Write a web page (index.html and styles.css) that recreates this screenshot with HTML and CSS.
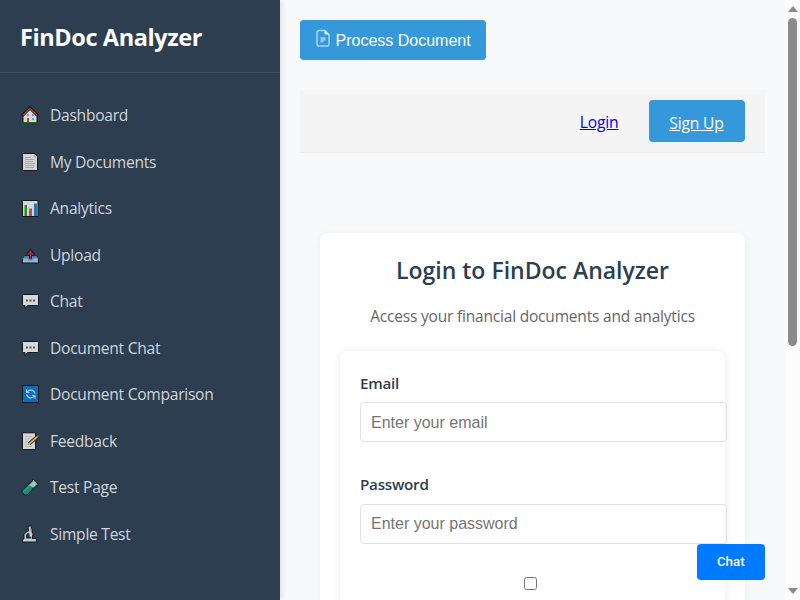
FILE: index.html
```html
<!DOCTYPE html>
<html lang="en">
<head>
<meta charset="utf-8">
<title>FinDoc Analyzer</title>
<link rel="stylesheet" href="styles.css">
</head>
<body>
<div class="app">
  <aside class="sidebar">
    <div class="brand"><h2>FinDoc Analyzer</h2></div>
    <ul class="menu">
      <li><svg class="icon" viewBox="0 0 18 18"><path d="M2 9v8h14V9L9 2z" fill="#d5d8dd" stroke="#171717"/><path d="M1.5 9.5 9 2l7.500 7.500" fill="none" stroke="#171717" stroke-width="3"/><path d="M2 9.300 9 2.300l7 7" fill="none" stroke="#b64434" stroke-width="1.300"/><path d="M6 8h2v2H6zM11 8h2v2h-2zM11 12h2v2h-2z" fill="#4dafd6"/><path d="M6 12h2v4H6z" fill="#c13b30"/><path d="M1.500 16h15v1.500h-15z" fill="#0c700c"/></svg><span>Dashboard</span></li>
      <li><svg class="icon" viewBox="0 0 18 18"><path d="M1.500 .5H14l2.500 3v14h-15z" fill="#d3d5d7" stroke="#171717"/><path d="M13.500 1v3h3M4 4.500h6M4 6.500h9M4 8.500h8M4 10.500h10M4 12.500h9M4 14.500h9" fill="none" stroke="#9a9da0" stroke-width=".8"/></svg><span>My Documents</span></li>
      <li><svg class="icon" viewBox="0 0 18 18"><path d="M1.500 1.500h15.500v16H1.500z" fill="#d5d7da" stroke="#171717"/><path d="M3.500 6H6v11H3.500z" fill="#1d981d"/><path d="M8 9.500h3V17H8z" fill="#d0493a"/><path d="M13 4.500h3V17h-3z" fill="#2275b9"/></svg><span>Analytics</span></li>
      <li><svg class="icon" viewBox="0 0 18 18"><path d="M3.500 10h12l2 2.500V17h-16v-4.500z" fill="#8db6d6" stroke="#171717"/><path d="M3.500 10.500h12l1.500 2h-4l-2 2H8l-2-2H2z" fill="#4b8fc0"/><path d="M9.500 13V6M6.500 8.500l3-3.500 3 3.500" fill="none" stroke="#21181d" stroke-width="3"/><path d="M9.500 13V6M7 8.500l2.500-3 2.500 3" fill="none" stroke="#b02039" stroke-width="1.500"/></svg><span>Upload</span></li>
      <li><svg class="icon" viewBox="0 0 18 18"><path d="M2.500 2.500h14l1 1v9l-1 1h-10L4 16.500v-3H2.500l-1-1v-9z" fill="#d6d7db" stroke="#171717"/><path d="M5 7.500h2v2H5zM8.500 7.500h2v2h-2zM12 7.500h2v2h-2z" fill="#50565c"/></svg><span>Chat</span></li>
      <li><svg class="icon" viewBox="0 0 18 18"><path d="M2.500 2.500h14l1 1v9l-1 1h-10L4 16.500v-3H2.500l-1-1v-9z" fill="#d6d7db" stroke="#171717"/><path d="M5 7.500h2v2H5zM8.500 7.500h2v2h-2zM12 7.500h2v2h-2z" fill="#50565c"/></svg><span>Document Chat</span></li>
      <li><svg class="icon" viewBox="0 0 18 18"><path d="M1.500 .5h16v17h-16z" fill="#0c6dbb" stroke="#171717"/><path d="M5.500 7.500V4.500M5.500 7.500h3M6 7a4.500 4.500 0 0 1 8 1.500M14 10.500v3M14 10.500h-3M13.500 11a4.500 4.500 0 0 1-8-1.500" fill="none" stroke="#b4cfe3" stroke-width="1.200"/></svg><span>Document Comparison</span></li>
      <li><svg class="icon" viewBox="0 0 18 18"><path d="M1.500 .8h13v16.700h-13z" fill="#d3d5d7" stroke="#171717"/><path d="M4 4.500h7M4 7h7M4 9.500h5M4 12h3M4 14.500h7" stroke="#aaadaf" stroke-width=".8"/><path d="m8 12 9.500-8.500" stroke="#171717" stroke-width="3.500"/><path d="m7.500 12.500 9-8" stroke="#d8ae5b" stroke-width="1.800"/><path d="m16 5 1.500-1.500" stroke="#bd5847" stroke-width="1.800"/></svg><span>Feedback</span></li>
      <li><svg class="icon" viewBox="0 0 18 18"><path d="m12 .8 5.500 5.700-2 .5-9 9.500q-2 1.500-4.500-.5t-.5-4l9.500-9z" fill="#168c72" stroke="#171717"/><path d="m12 1.500 4.500 5-1.500.500-2.500 2.500-4.500-2 4-4z" fill="#a0c1d5"/><path d="m3 13.500 5-5" stroke="#3fae92"/></svg><span>Test Page</span></li>
      <li><svg class="icon" viewBox="0 0 18 18"><path d="m7 1.500 3-1 2 9-1 4h4.500v3.500h-14v-3h1.500V9.500Q4 7 7.500 6z" fill="#c9ced2" stroke="#171717"/><path d="m6.500 8 2 .500v3H10v2H5V10z" fill="#26313b"/><path d="M2 15.500h13" stroke="#a9cbe3"/><path d="m9.500 2 1 6" stroke="#858c92"/></svg><span>Simple Test</span></li>
    </ul>
  </aside>
  <main class="content">
    <button class="process" type="button"><svg viewBox="0 0 16 18"><path d="M4 1.500h6l4 4V15.500a1.500 1.500 0 0 1-1.500 1.500H4a2 2 0 0 1-2-2V3.500a2 2 0 0 1 2-2z" fill="none" stroke="#a9d5f1" stroke-width="1.500"/><path d="M9.500 1.500v2.500A1.500 1.500 0 0 0 11 5.500h3z" fill="#fff"/><path d="M5.500 8h5v3.500h-2v2h-3z" fill="#94caee"/></svg><span>Process Document</span></button>
    <nav class="auth"><a class="login" href="#">Login</a><a class="signup" href="#">Sign Up</a></nav>
    <section class="card">
      <h1>Login to FinDoc Analyzer</h1>
      <p>Access your financial documents and analytics</p>
      <form class="form">
        <div class="field"><label for="email">Email</label><input id="email" type="email" placeholder="Enter your email"></div>
        <div class="field"><label for="password">Password</label><input id="password" type="password" placeholder="Enter your password"></div>
        <input class="remember" type="checkbox">
      </form>
    </section>
  </main>
  <div class="scroll"><i class="up"></i><i class="thumb"></i><i class="down"></i></div>
</div>
<button class="chat" type="button">Chat</button>
</body>
</html>
```
FILE: styles.css
```css
* { box-sizing: border-box; }
body { margin: 0; overflow: hidden; background: #f8f9fb; font: 16px/24px "Open Sans", "Noto Sans", sans-serif; color: #2c3e50; }
.app { display: flex; height: 600px; overflow: hidden; }
.sidebar { flex: 0 0 280px; height: 600px; background: #2c3e50; box-shadow: 2px 0 5px rgba(0,0,0,.1); }
.brand { height: 73px; padding: 20px; border-bottom: 1px solid #3f5061; }
.brand h2 { margin: 0; font-size: 23.500px; line-height: 35px; font-weight: 700; letter-spacing: -.4px; color: #fff; white-space: nowrap; }
.menu { list-style: none; margin: 0; padding: 18.700px 0 0; }
.menu li { display: flex; align-items: center; height: 46.550px; padding-left: 21px; gap: 11px; color: #d1d5da; font-size: 15.600px; letter-spacing: -.27px; white-space: nowrap; }
.icon { width: 18px; height: 18px; flex: none; }
.content { flex: 1; min-width: 0; padding: 20px; }
.process { display: flex; align-items: center; gap: 4.500px; width: 185.500px; height: 40px; padding: 0 15px; border: 0; border-radius: 4px; background: #3498db; color: #fff; font: 16px "Liberation Sans", sans-serif; white-space: nowrap; }
.process svg { width: 16px; height: 18px; flex: none; margin-top: -4px; }
.process span { padding-top: 1px; }
.auth { display: flex; justify-content: flex-end; align-items: center; gap: 30px; height: 63px; margin-top: 30px; padding: 0 20.500px 0 0; background: #f4f4f4; border-bottom: 1px solid #eee; font-size: 15.600px; letter-spacing: -.15px; }
.login { padding-top: 2px; color: #0000ee; }
.signup { display: flex; align-items: center; justify-content: center; width: 96px; height: 42px; padding-top: 3px; border-radius: 4px; background: #3498db; color: #fff; }
.card { height: 600px; margin: 80px 20px 0; padding: 20px; border-radius: 8px; background: #fff; box-shadow: 0 2px 10px rgba(0,0,0,.06); }
.card h1 { margin: 0; font-size: 23px; line-height: 34px; font-weight: 600; text-align: center; white-space: nowrap; }
.card p { margin: 17px 0 22.500px; font-size: 15.500px; letter-spacing: -.19px; line-height: 24px; color: #666; text-align: center; white-space: nowrap; }
.form { height: 500px; padding: 20px; border-radius: 8px; background: #fff; box-shadow: 0 0 10px rgba(0,0,0,.08); }
.field { height: 101.500px; }
.field label { display: block; height: 31.800px; font-size: 15.200px; letter-spacing: -.25px; line-height: 25px; font-weight: 600; }
.field input { display: block; width: 366.500px; height: 40px; padding: 1px 10px 0; border: 1px solid #e2e2e2; border-radius: 4px; background: transparent; font: 16px "Liberation Sans", sans-serif; }
.field input::placeholder { color: #757575; }
.remember { display: block; width: 13px; height: 13px; margin: 3.500px 0 0 163.500px; }
.scroll { flex: 0 0 15px; display: flex; flex-direction: column; align-items: center; background: #fcfcfc; }
.up { margin-top: 6px; border: 5px solid transparent; border-top: 0; border-bottom: 6px solid #8b8b8b; }
.thumb { width: 9px; height: 328px; margin-top: 6px; border-radius: 5px; background: #8b8b8b; }
.down { margin-top: auto; margin-bottom: 6px; border: 5px solid transparent; border-bottom: 0; border-top: 6px solid #8b8b8b; }
.chat { position: absolute; right: 35.500px; bottom: 20px; width: 67.500px; height: 36px; padding: 0 0 2px; border: 0; border-radius: 4px; background: #007bff; color: #fff; font: 500 13.333px Roboto, sans-serif; }
```
